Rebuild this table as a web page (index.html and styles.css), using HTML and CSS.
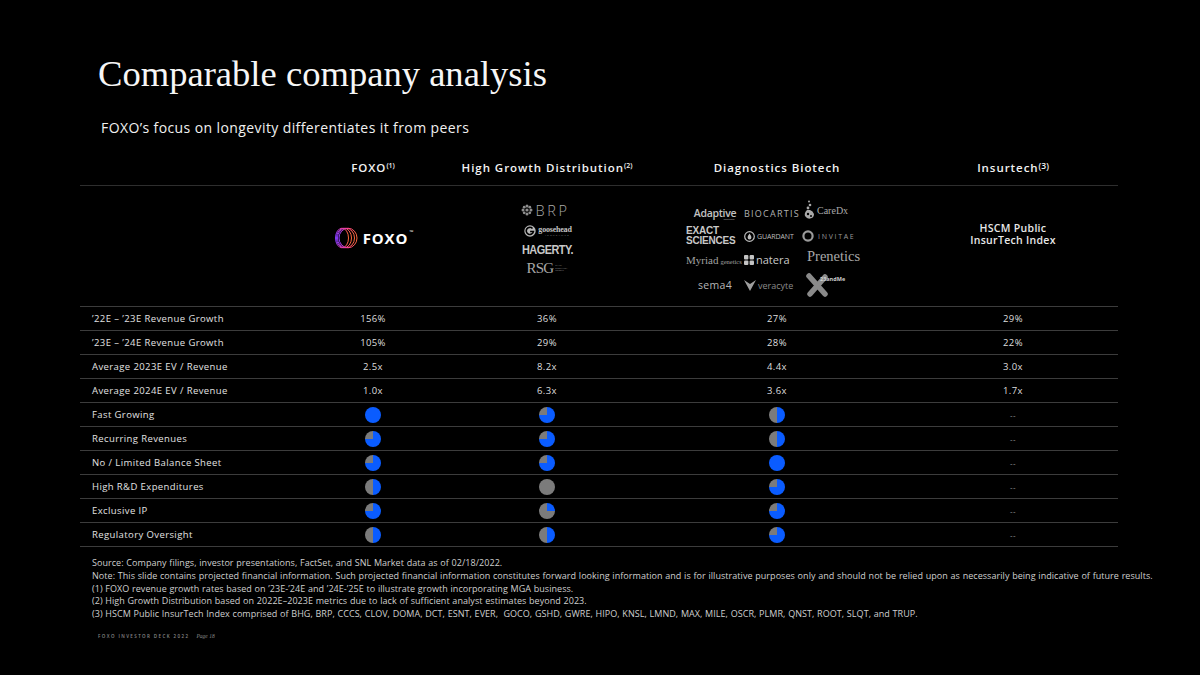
FILE: index.html
```html
<!DOCTYPE html>
<html lang="en">
<head>
<meta charset="utf-8">
<title>Comparable company analysis</title>
<link rel="stylesheet" href="styles.css">
</head>
<body>
<main class="slide">
  <h1 class="title">Comparable company analysis</h1>
  <p class="subtitle">FOXO’s focus on longevity differentiates it from peers</p>

  <section class="table">
    <div class="row head">
      <div class="cell label"></div>
      <div class="cell">FOXO<sup>(1)</sup></div>
      <div class="cell">High Growth Distribution<sup>(2)</sup></div>
      <div class="cell">Diagnostics Biotech</div>
      <div class="cell">Insurtech<sup class="big">(3)</sup></div>
    </div>

    <div class="row logos">
      <div class="cell label"></div>
      <div class="cell foxo-cell">
        <div class="foxo-logo">
          <svg width="24" height="22" viewBox="0 0 24 22">
            <defs>
              <linearGradient id="fg" x1="0" y1="0" x2="1" y2="0">
                <stop offset="0" stop-color="#8a3cff"/>
                <stop offset="0.5" stop-color="#ff3f8e"/>
                <stop offset="1" stop-color="#ff6a3d"/>
              </linearGradient>
            </defs>
            <g fill="none" stroke="url(#fg)" stroke-width="1">
              <ellipse cx="8" cy="11" rx="6.5" ry="9.8"/>
              <ellipse cx="10" cy="11" rx="7.5" ry="9.8"/>
              <ellipse cx="12" cy="11" rx="8.5" ry="9.8"/>
              <ellipse cx="14" cy="11" rx="9" ry="9.8"/>
            </g>
          </svg>
          <span class="foxo-word">FOXO<small>™</small></span>
        </div>
      </div>
      <div class="cell hgd-cell">
        <div class="hgd">
          <div class="brp">
            <svg width="12" height="12" viewBox="0 0 12 12"><g fill="#8d8d8d"><circle cx="6" cy="2" r="1.5"/><circle cx="6" cy="10" r="1.5"/><circle cx="2" cy="6" r="1.5"/><circle cx="10" cy="6" r="1.5"/><circle cx="3.2" cy="3.2" r="1.4"/><circle cx="8.8" cy="3.2" r="1.4"/><circle cx="3.2" cy="8.8" r="1.4"/><circle cx="8.8" cy="8.8" r="1.4"/><circle cx="6" cy="6" r="1.6"/></g></svg>
            <span>BRP</span>
          </div>
          <div class="goose">
            <svg width="12" height="12" viewBox="0 0 11 11"><circle cx="5.5" cy="5.5" r="5.2" fill="#b9b9b9"/><path d="M7.8 3.2 A3.3 3.3 0 1 0 8.6 6 H5.6" fill="none" stroke="#000" stroke-width="1.5"/></svg>
            <span class="goose-text"><b>goosehead</b><i>INSURANCE</i></span>
          </div>
          <div class="hagerty">HAGERTY.</div>
          <div class="rsg"><span>RSG</span><i>RYAN<br>SPECIALTY<br>GROUP</i></div>
        </div>
      </div>
      <div class="cell bio-cell">
        <div class="biotech">
          <span class="adaptive">Adaptive<i>biotechnologies</i></span>
          <span class="biocartis">BIOCARTIS</span>
          <span class="caredx">
            <svg width="12" height="20" viewBox="0 0 12 20"><g fill="#a9a9a9"><circle cx="5" cy="1.5" r="1"/><circle cx="6" cy="5" r="1.3"/><circle cx="4" cy="8" r="1.4"/><path d="M3 10 Q0 13 1 16 Q3 19 6 18.6 Q10 18 10 14 Q9 11 6 10 Z"/></g><g fill="#000"><circle cx="4" cy="14" r="1.2"/><circle cx="7" cy="16" r="1"/></g></svg>
            CareDx
          </span>
          <span class="exact"><em>EXACT</em><em>SCIENCES</em></span>
          <span class="guardant">
            <svg width="11" height="11" viewBox="0 0 11 11"><circle cx="5.5" cy="5.5" r="4.8" fill="none" stroke="#bdbdbd" stroke-width="1.2"/><path d="M5.5 2.6 Q7.6 5.4 7.4 6.6 A1.9 1.9 0 0 1 3.6 6.6 Q3.4 5.4 5.5 2.6 Z" fill="#bdbdbd"/></svg>
            GUARDANT
          </span>
          <span class="invitae">
            <svg width="12" height="12" viewBox="0 0 12 12"><circle cx="6" cy="6" r="4.6" fill="none" stroke="#9a9a9a" stroke-width="2.2"/></svg>
            INVITAE
          </span>
          <span class="myriad">Myriad<i>genetics</i></span>
          <span class="natera">
            <svg width="10" height="10" viewBox="0 0 10 10"><g fill="#c4c4c4"><rect x="0" y="0" width="4.4" height="4.4" rx="1"/><rect x="5.6" y="0" width="4.4" height="4.4" rx="1"/><rect x="0" y="5.6" width="4.4" height="4.4" rx="1"/><rect x="5.6" y="5.6" width="4.4" height="4.4" rx="1"/></g></svg>
            natera
          </span>
          <span class="prenetics">Prenetics</span>
          <span class="sema">sema4</span>
          <span class="veracyte">
            <svg width="12" height="11" viewBox="0 0 12 11"><path d="M0 0 L6 11 L12 0 L6 4 Z" fill="#9e9e9e"/></svg>
            veracyte
          </span>
          <span class="ttm">
            <svg width="26" height="24" viewBox="0 0 26 24"><g stroke="#8a8a8a" stroke-width="5.5" stroke-linecap="round"><line x1="4" y1="3" x2="20" y2="21"/><line x1="20" y1="4" x2="5" y2="21"/></g></svg>
            <b>23andMe</b>
          </span>
        </div>
      </div>
      <div class="cell insur">HSCM Public<br>InsurTech Index</div>
    </div>

    <div class="row data">
      <div class="cell label">’22E – ’23E Revenue Growth</div>
      <div class="cell">156%</div><div class="cell">36%</div><div class="cell">27%</div><div class="cell">29%</div>
    </div>
    <div class="row data">
      <div class="cell label">’23E – ’24E Revenue Growth</div>
      <div class="cell">105%</div><div class="cell">29%</div><div class="cell">28%</div><div class="cell">22%</div>
    </div>
    <div class="row data">
      <div class="cell label">Average 2023E EV / Revenue</div>
      <div class="cell">2.5x</div><div class="cell">8.2x</div><div class="cell">4.4x</div><div class="cell">3.0x</div>
    </div>
    <div class="row data">
      <div class="cell label">Average 2024E EV / Revenue</div>
      <div class="cell">1.0x</div><div class="cell">6.3x</div><div class="cell">3.6x</div><div class="cell">1.7x</div>
    </div>
    <div class="row data">
      <div class="cell label">Fast Growing</div>
      <div class="cell"><span class="pie q4"></span></div><div class="cell"><span class="pie q3"></span></div><div class="cell"><span class="pie q2"></span></div><div class="cell dash">--</div>
    </div>
    <div class="row data">
      <div class="cell label">Recurring Revenues</div>
      <div class="cell"><span class="pie q3"></span></div><div class="cell"><span class="pie q3"></span></div><div class="cell"><span class="pie q2"></span></div><div class="cell dash">--</div>
    </div>
    <div class="row data">
      <div class="cell label">No / Limited Balance Sheet</div>
      <div class="cell"><span class="pie q3"></span></div><div class="cell"><span class="pie q3"></span></div><div class="cell"><span class="pie q4"></span></div><div class="cell dash">--</div>
    </div>
    <div class="row data">
      <div class="cell label">High R&amp;D Expenditures</div>
      <div class="cell"><span class="pie q2"></span></div><div class="cell"><span class="pie q0"></span></div><div class="cell"><span class="pie q3"></span></div><div class="cell dash">--</div>
    </div>
    <div class="row data">
      <div class="cell label">Exclusive IP</div>
      <div class="cell"><span class="pie q3"></span></div><div class="cell"><span class="pie q1"></span></div><div class="cell"><span class="pie q3"></span></div><div class="cell dash">--</div>
    </div>
    <div class="row data">
      <div class="cell label">Regulatory Oversight</div>
      <div class="cell"><span class="pie q2"></span></div><div class="cell"><span class="pie q2"></span></div><div class="cell"><span class="pie q3"></span></div><div class="cell dash">--</div>
    </div>
  </section>

  <div class="notes">
    <p>Source: Company filings, investor presentations, FactSet, and SNL Market data as of 02/18/2022.</p>
    <p>Note: This slide contains projected financial information. Such projected financial information constitutes forward looking information and is for illustrative purposes only and should not be relied upon as necessarily being indicative of future results.</p>
    <p>(1) FOXO revenue growth rates based on ’23E-’24E and ’24E-’25E to illustrate growth incorporating MGA business.</p>
    <p>(2) High Growth Distribution based on 2022E–2023E metrics due to lack of sufficient analyst estimates beyond 2023.</p>
    <p>(3) HSCM Public InsurTech Index comprised of BHG, BRP, CCCS, CLOV, DOMA, DCT, ESNT, EVER,&nbsp; GOCO, GSHD, GWRE, HIPO, KNSL, LMND, MAX, MILE, OSCR, PLMR, QNST, ROOT, SLQT, and TRUP.</p>
  </div>

  <div class="footer"><span class="deck">FOXO INVESTOR DECK 2022</span><span class="page">Page 18</span></div>
</main>
</body>
</html>
```

FILE: styles.css
```css
* { box-sizing: border-box; }
html, body { margin: 0; padding: 0; background: #000; }
body { width: 1200px; height: 675px; overflow: hidden; color: #fff; font-family: "Open Sans", "Noto Sans", sans-serif; }

.slide { padding: 52px 82px 0 80px; }

.title {
  margin: 0 0 0 18px;
  font-family: "Liberation Serif", "DejaVu Serif", serif;
  font-weight: 400;
  font-size: 36.6px;
  line-height: 44px;
  color: #f6f6f6;
}
.subtitle {
  margin: 23px 0 0 21px;
  font-size: 14px;
  line-height: 18px;
  font-weight: 500;
  letter-spacing: 0.4px;
  color: #f0f0f0;
}

.table { margin-top: 13px; }
.row {
  display: grid;
  grid-template-columns: 210px 166px 182px 278px 194px;
  border-bottom: 1px solid #3c3c3c;
}
.cell {
  display: flex;
  align-items: center;
  justify-content: center;
  text-align: center;
}
.cell.label { justify-content: flex-start; padding-left: 12px; }

.head { height: 36px; border-bottom-color: #2e2e2e; }
.head .cell { font-size: 11.5px; font-weight: 600; letter-spacing: 0.95px; color: #f2f2f2; }
.head sup { font-size: 7px; vertical-align: top; position: relative; top: -2px; letter-spacing: 0; }
.head sup.big { font-size: 8.5px; }

.logos { height: 121px; }
.logos .cell { align-items: flex-start; }

.data { height: 24px; font-size: 9.5px; letter-spacing: 0.4px; color: #dedede; }
.data .cell.label { color: #e2e2e2; }
.dash { color: #9a9a9a; font-size: 8px; }

.pie {
  width: 16px; height: 16px; border-radius: 50%;
  display: block;
  background: #7b7b7b;
}
.q4 { background: #0a5cff; }
.q3 { background: conic-gradient(#0a5cff 0 75%, #7b7b7b 0); }
.q2 { background: conic-gradient(#0a5cff 0 50%, #7b7b7b 0); }
.q1 { background: conic-gradient(#0a5cff 0 25%, #7b7b7b 0); }
.q0 { background: #7b7b7b; }

/* FOXO logo */
.foxo-cell { padding-top: 41px; }
.foxo-logo { display: flex; align-items: center; gap: 5px; margin-left: -4px; }
.foxo-word { font-size: 15px; font-weight: 700; letter-spacing: 0.8px; color: #fff; position: relative; }
.foxo-word small { font-size: 5px; position: absolute; top: 1px; right: -6px; font-weight: 400; }

/* High Growth Distribution logos */
.hgd-cell { padding-top: 14px; }
.hgd { display: flex; flex-direction: column; align-items: center; color: #b8b8b8; }
.brp { display: flex; align-items: center; gap: 3px; height: 20px; margin-left: -4px; }
.brp span { font-size: 14.5px; letter-spacing: 2.6px; font-weight: 300; color: #a8a8a8; }
.goose { display: flex; align-items: center; gap: 2px; height: 22px; margin-left: 2px; }
.goose-text { display: flex; flex-direction: column; line-height: 1; }
.goose-text b { font-family: "Liberation Serif", serif; font-size: 8px; letter-spacing: -0.2px; color: #c4c4c4; }
.goose-text i { font-style: normal; font-size: 2.5px; letter-spacing: 1.2px; color: #888; margin-left: 5px; }
.hagerty { font-family: "Liberation Sans Narrow", "Liberation Sans", sans-serif; font-weight: 700; font-size: 13px; letter-spacing: -0.6px; color: #c8c8c8; height: 16px; line-height: 16px; transform: scaleX(0.84); }
.rsg { display: flex; align-items: center; gap: 2px; height: 20px; }
.rsg span { font-family: "Liberation Serif", serif; font-size: 15px; color: #a8a8a8; letter-spacing: -0.8px; }
.rsg i { font-style: normal; font-size: 2.5px; line-height: 1.1; color: #888; text-align: left; }

/* Diagnostics Biotech logos */
.bio-cell { justify-content: flex-start; padding-left: 48px; padding-top: 16px; }
.biotech {
  display: grid;
  grid-template-columns: 58px 58px 70px;
  grid-template-rows: 22px 24px 23px 28px;
  align-items: center;
  justify-items: start;
  color: #b5b5b5;
}
.biotech span { display: flex; align-items: center; white-space: nowrap; }
.adaptive { font-size: 10.5px; font-weight: 600; letter-spacing: -0.3px; position: relative; color: #c2c2c2; justify-self: center; }
.adaptive i { position: absolute; font-style: normal; font-size: 2px; top: 13px; right: 2px; color: #777; line-height: 2px; }
.biocartis { font-size: 9px; letter-spacing: 1.25px; color: #b0b0b0; }
.caredx { font-family: "Liberation Serif", serif; font-size: 10px; color: #aaa; gap: 1px; margin-top: -6px; margin-left: 2px; }
.biotech .exact { flex-direction: column; align-items: flex-start; }
.exact em { font-style: normal; font-family: "Liberation Sans", sans-serif; font-size: 10px; font-weight: 700; line-height: 10.5px; letter-spacing: -0.2px; color: #c8c8c8; }
.guardant { font-size: 7px; letter-spacing: -0.1px; color: #bdbdbd; gap: 2px; }
.invitae { font-size: 7px; letter-spacing: 1.7px; color: #9a9a9a; gap: 4px; }
.myriad { font-family: "Liberation Serif", serif; font-size: 11px; color: #a0a0a0; align-items: baseline !important; }
.myriad i { font-style: normal; font-size: 6.5px; margin-left: 2px; }
.natera { font-size: 11px; color: #c8c8c8; gap: 2px; }
.prenetics { font-family: "Liberation Serif", serif; font-size: 14.5px; color: #a8a8a8; margin-top: -6px; margin-left: 5px; }
.sema { font-size: 10.5px; color: #b5b5b5; justify-self: center; letter-spacing: 0.3px; }
.veracyte { font-size: 9px; color: #8a8a8a; gap: 2px; }
.ttm { position: relative; margin-left: 3px; }
.ttm b { position: absolute; left: 15px; top: 2px; font-size: 5.5px; color: #d0d0d0; font-weight: 700; }

.insur { font-size: 10.5px; font-weight: 600; line-height: 12px; letter-spacing: 0.3px; color: #e8e8e8; padding-top: 36px; }

/* notes */
.notes { margin-top: 10px; padding-left: 12px; }
.notes p { margin: 0; font-size: 9px; line-height: 12.8px; color: #cfcfcf; letter-spacing: 0.05px; word-spacing: 0.3px; white-space: nowrap; }
.footer { margin-top: 12px; padding-left: 18px; font-size: 4.5px; color: #888; display: flex; gap: 7px; align-items: baseline; }
.footer .deck { letter-spacing: 1.4px; font-weight: 600; }
.footer .page { font-family: "Liberation Serif", serif; font-style: italic; font-size: 5.5px; }
```
